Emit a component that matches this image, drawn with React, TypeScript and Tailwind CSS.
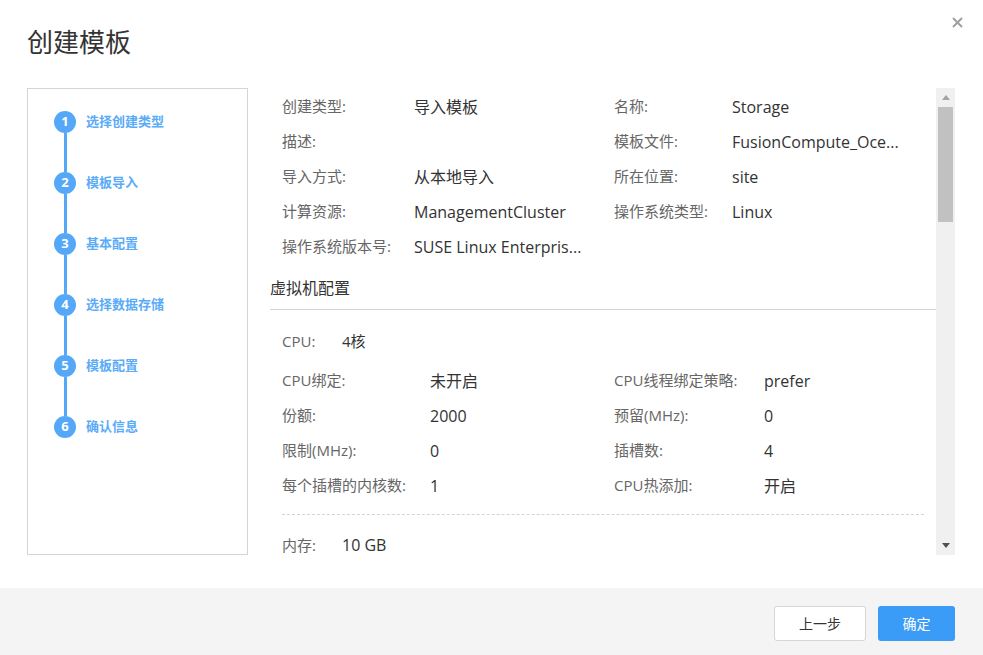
import React from 'react';

const font = { fontFamily: '"Open Sans", "Noto Sans CJK SC", sans-serif' };

const steps = ['选择创建类型', '模板导入', '基本配置', '选择数据存储', '模板配置', '确认信息'];

const basicRows: [string, string, string, string][] = [
  ['创建类型:', '导入模板', '名称:', 'Storage'],
  ['描述:', '', '模板文件:', 'FusionCompute_Oce...'],
  ['导入方式:', '从本地导入', '所在位置:', 'site'],
  ['计算资源:', 'ManagementCluster', '操作系统类型:', 'Linux'],
  ['操作系统版本号:', 'SUSE Linux Enterpris...', '', ''],
];

const cpuRows: [string, string, string, string][] = [
  ['CPU绑定:', '未开启', 'CPU线程绑定策略:', 'prefer'],
  ['份额:', '2000', '预留(MHz):', '0'],
  ['限制(MHz):', '0', '插槽数:', '4'],
  ['每个插槽的内核数:', '1', 'CPU热添加:', '开启'],
];

const StepList = () => (
  <div className="w-[221px] shrink-0 border border-[#d4d4d4] pt-[22px] pl-[26px]">
    {steps.map((s, i) => (
      <div key={s} className="flex">
        <div className="flex flex-col items-center w-[22px]">
          <div className="w-[22px] h-[22px] rounded-full bg-[#55a8f8] text-white text-[13px] font-bold flex items-center justify-center">
            {i + 1}
          </div>
          {i < steps.length - 1 && <div className="w-[3px] h-[39px] bg-[#55a8f8]" />}
        </div>
        <div className="ml-[10px] h-[22px] flex items-center text-[13px] font-semibold text-[#5aabf8]">{s}</div>
      </div>
    ))}
  </div>
);

const Row = ({ r, lw, rw }: { r: [string, string, string, string]; lw: string; rw: string }) => (
  <div className="flex h-[35px] items-center">
    <div className="flex w-[332px]">
      <span className={`${lw} shrink-0 text-[15px] text-[#666]`}>{r[0]}</span>
      <span className="text-[16px] text-[#333]">{r[1]}</span>
    </div>
    <div className="flex">
      <span className={`${rw} shrink-0 text-[15px] text-[#666]`}>{r[2]}</span>
      <span className="text-[16px] text-[#333]">{r[3]}</span>
    </div>
  </div>
);

const Scrollbar = () => (
  <div className="w-[19px] shrink-0 bg-[#f0f0f0] flex flex-col items-center">
    <div className="h-[19px] flex items-center justify-center">
      <svg width="8" height="5" viewBox="0 0 8 5"><path d="M0 5 L4 0 L8 5 Z" fill="#a3a3a3" /></svg>
    </div>
    <div className="w-[15px] h-[115px] bg-[#c1c1c1]" />
    <div className="flex-1" />
    <div className="h-[19px] flex items-center justify-center">
      <svg width="8" height="5" viewBox="0 0 8 5"><path d="M0 0 L4 5 L8 0 Z" fill="#505050" /></svg>
    </div>
  </div>
);

export default function App() {
  return (
    <div style={font} className="w-[983px] h-[655px] bg-white flex flex-col overflow-hidden">
      <div className="h-[88px] shrink-0 flex items-start justify-between pl-[27px] pr-[20px]">
        <h1 className="mt-[24px] text-[26px] leading-[36px] text-[#333]">创建模板</h1>
        <svg className="mt-[17px]" width="11" height="11" viewBox="0 0 11 11">
          <path d="M1 1 L10 10 M10 1 L1 10" stroke="#a0a0a0" strokeWidth="2" />
        </svg>
      </div>

      <div className="h-[467px] shrink-0 flex pl-[27px] pr-[28px]">
        <StepList />
        <div className="flex-1 overflow-hidden pl-[22px] pr-[12px] pt-[1px]">
          <div className="pl-[12px]">
            {basicRows.map((r) => (
              <Row key={r[0]} r={r} lw="w-[132px]" rw="w-[118px]" />
            ))}
          </div>
          <div className="mt-[12px] h-[24px] flex items-center text-[16px] text-[#333]">虚拟机配置</div>
          <div className="mt-[9px] border-b border-[#d4d4d4] -mr-[12px]" />
          <div className="pl-[12px]">
            <div className="h-[35px] mt-[14px] flex items-center">
              <span className="w-[60px] text-[15px] text-[#666]">CPU:</span>
              <span className="text-[15px] text-[#333]">4核</span>
            </div>
            <div className="mt-[4px]">
              {cpuRows.map((r) => (
                <Row key={r[0]} r={r} lw="w-[148px]" rw="w-[150px]" />
              ))}
            </div>
            <div className="mt-[11px] border-b border-dashed border-[#d4d4d4]" />
            <div className="h-[20px] mt-[20px] flex items-center">
              <span className="w-[60px] text-[15px] leading-[20px] text-[#666]">内存:</span>
              <span className="text-[16px] leading-[20px] text-[#333]">10 GB</span>
            </div>
          </div>
        </div>
        <Scrollbar />
      </div>

      <div className="flex-1 mt-[33px] bg-[#f4f4f4] flex items-start justify-end gap-[12px] pr-[28px] pt-[18px]">
        <button className="w-[92px] h-[35px] bg-white border border-[#d6d6d6] rounded-[3px] text-[14px] text-[#333]">上一步</button>
        <button className="w-[77px] h-[35px] bg-[#3b9cf7] rounded-[3px] text-[14px] text-white">确定</button>
      </div>
    </div>
  );
}
